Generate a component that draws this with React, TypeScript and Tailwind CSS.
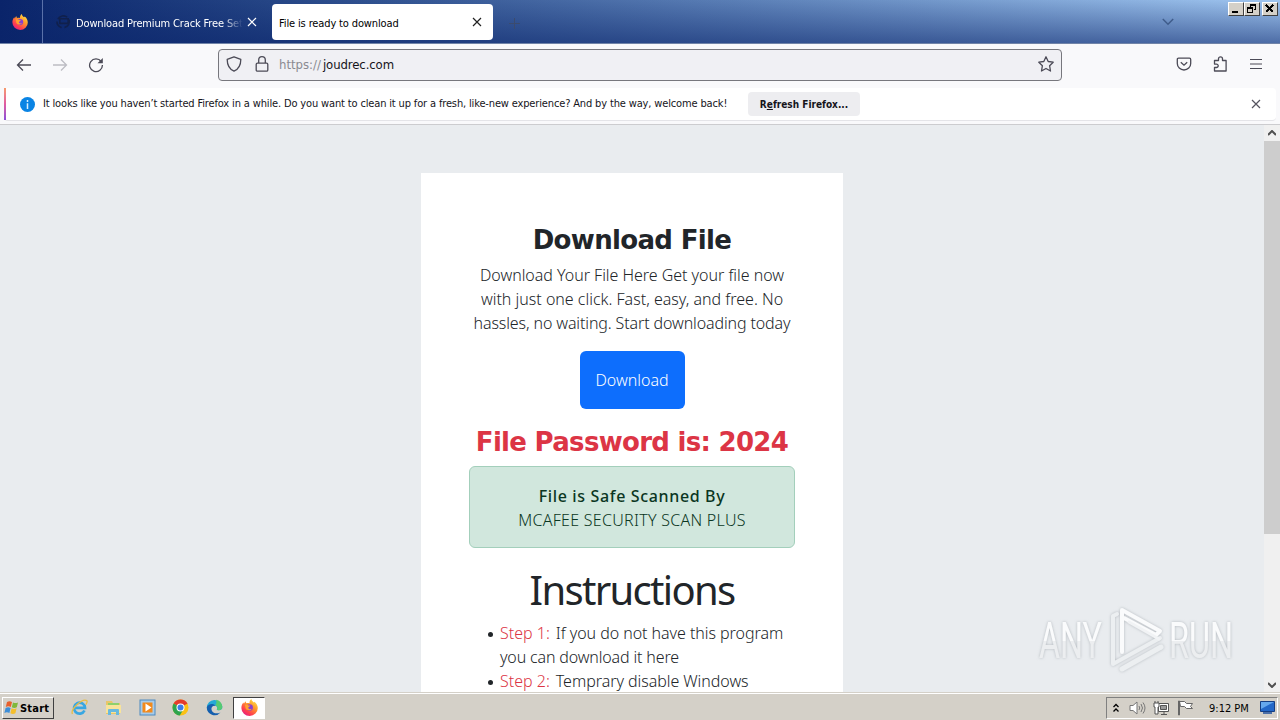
import type { ReactNode } from 'react';

const description = [
  { text: 'Download Your File Here Get your file now', style: 'tracking-[-0.03px]' },
  { text: 'with just one click. Fast, easy, and free. No', style: '' },
  { text: 'hassles, no waiting. Start downloading today', style: 'tracking-[-0.12px]' },
];

const steps = [
  { label: 'Step 1:', lines: ['If you do not have this program', 'you can download it here'] },
  { label: 'Step 2:', lines: ['Temprary disable Windows'] },
];

function FirefoxIcon({ size = 16 }: { size?: number }) {
  return (
    <svg width={size} height={size} viewBox="0 0 16 16">
      <defs>
        <linearGradient id="fx" x1="0.9" y1="0" x2="0.2" y2="1">
          <stop offset="0" stopColor="#fff04d" />
          <stop offset="0.4" stopColor="#ff9a2a" />
          <stop offset="0.75" stopColor="#ff3f4f" />
          <stop offset="1" stopColor="#e01b8a" />
        </linearGradient>
      </defs>
      <path d="M9.800 0c.2 1.800 1.400 2.400 2.300 3.300l.5-.8c1.900 1.300 3.200 3.400 3.200 6A7.700 7.400 0 0 1 .4 8.600C.3 6.400 1 4.600 2.400 3.200l.3 1.200L4.200 2l.8 2c1-.4 2-.4 3 0C7.900 2.300 8.500.8 9.800 0z" fill="url(#fx)" />
      <circle cx="8.200" cy="8" r="3" fill="#8a3fd0" />
      <path d="M3.800 5.600c1.300-.7 2.500-.2 3.200.4l1.800.2c-.2 1.100-1.600 1-1.900 1.900-.3 1.200 1.300 2 3.200 1-1 1.900-4.700 2.100-5.800-.4z" fill="#ffa22e" />
    </svg>
  );
}

function CloseIcon({ className }: { className: string }) {
  return (
    <svg className={className} width="10" height="10" viewBox="0 0 10 10" stroke="currentColor" strokeWidth="1.2" fill="none">
      <path d="M1 1l8 8M9 1L1 9" />
    </svg>
  );
}

function WinButton({ children }: { children: ReactNode }) {
  return (
    <div className="flex h-[14px] w-4 items-center justify-center border border-t-white border-r-[#404040] border-b-[#404040] border-l-white bg-[#d4d0c8]">
      <svg width="12" height="12" viewBox="0 0 12 12" fill="none" stroke="#000" shapeRendering="crispEdges">
        {children}
      </svg>
    </div>
  );
}

function TabStrip() {
  return (
    <div className="h-11 shrink-0 bg-linear-to-r from-[#0a246a] to-[#a0c6f0]">
      <div className="flex h-full border-b border-[#7184a8] bg-linear-to-b from-transparent to-[#0a246a]/55">
        <div className="flex w-[43px] items-center justify-center border-r border-[#5a71a9] pr-0.5">
          <FirefoxIcon size={16} />
        </div>
        <div className="flex w-[229px] items-center pl-[13px]">
          <svg width="15" height="15" viewBox="0 0 16 16" fill="none" stroke="#10204c" strokeWidth="1.700">
            <path d="M2 5.500C4 2 9 .8 12 3.500M14 6c1 4-1 7.500-5 8.500M6 14.500C3 13.500 1 11 1 8M4 5h9v5H4z" />
          </svg>
          <div className="mt-1 ml-[5px] w-[167px] mask-r-from-88% mask-r-to-100% text-[11px] leading-4 tracking-[-0.14px] whitespace-nowrap text-white">
            Download Premium Crack Free Set
          </div>
          <CloseIcon className="ml-1 text-white" />
        </div>
        <div className="mt-1 flex h-9 w-[221px] items-center rounded bg-white pr-[11px] pl-[7px] text-[11px] text-black">
          <span className="flex-1 pt-[3px] leading-4 tracking-[-0.13px] whitespace-nowrap">File is ready to download</span>
          <CloseIcon className="text-[#222]" />
        </div>
        <svg className="mt-[18px] ml-4" width="11" height="11" viewBox="0 0 11 11" stroke="#3b4b6e">
          <path d="M5.500 0v11M0 5.500h11" />
        </svg>
        <svg className="mt-[18px] ml-auto" width="12" height="8" viewBox="0 0 12 8" fill="none" stroke="#3f5c8b" strokeWidth="1.500">
          <path d="M.8 1L6 6.200 11.200 1" />
        </svg>
        <div className="mt-0.5 mr-0.5 ml-[54px] flex">
          <WinButton><path d="M2 9.500h6M2 8.500h6" /></WinButton>
          <WinButton><path d="M4 2h6M4 1v3M9.500 1v6M8 6.500h2M4 1.500h6M1.500 4v6M1 5h6M6.500 4v6M1 9.500h6M1 4.500h6" /></WinButton>
          <div className="w-0.5" />
          <WinButton><path d="M2 2l7 7M9 2L2 9" strokeWidth="1.800" /></WinButton>
        </div>
      </div>
    </div>
  );
}

function Toolbar() {
  return (
    <div className="flex h-11 shrink-0 items-center bg-[#f9f9fb] pb-0.5 text-[#4c4b57]">
      <svg className="ml-4" width="16" height="16" viewBox="0 0 16 16" fill="none" stroke="currentColor" strokeWidth="1.300">
        <path d="M15 8H1.500M7 2.500L1.500 8 7 13.500" />
      </svg>
      <svg className="ml-5 text-[#bdbdc3]" width="16" height="16" viewBox="0 0 16 16" fill="none" stroke="currentColor" strokeWidth="1.300">
        <path d="M1 8h13.500M9 2.500L14.500 8 9 13.500" />
      </svg>
      <svg className="ml-5" width="16" height="16" viewBox="0 0 16 16" fill="none" stroke="currentColor" strokeWidth="1.300">
        <path d="M13.200 4.500A6.400 6.400 0 1 0 14.400 8" />
        <path d="M14.800 1v5.300H9.500z" fill="currentColor" stroke="none" />
      </svg>

      <div className="ml-[114px] flex h-8 w-[844px] items-center rounded border border-[#77777d] bg-[#f0f0f4]">
        <svg className="ml-[7px] -mt-0.5" width="16" height="16" viewBox="0 0 16 16" fill="none" stroke="currentColor" strokeWidth="1.300">
          <path d="M8 .8l6.800 2.600c0 5-2 9.500-6.800 11.800C3.200 12.900 1.200 8.400 1.200 3.400z" strokeLinejoin="round" />
        </svg>
        <svg className="ml-3 -mt-0.5" width="16" height="16" viewBox="0 0 16 16" fill="none" stroke="currentColor" strokeWidth="1.300">
          <rect x="2.200" y="7.200" width="11.600" height="8" rx="1.200" />
          <path d="M4.700 7V4a3.300 3.300 0 0 1 6.600 0v3" />
        </svg>
        <span className="ml-[9px] text-[13px] whitespace-nowrap text-[#15141a]">
          <span className="text-[#8a8a91]">https://</span>
          <span className="ml-0.5 tracking-[-0.1px]">joudrec.com</span>
        </span>
        <svg className="-mt-0.5 mr-[7px] ml-auto" width="16" height="16" viewBox="0 0 16 16" fill="none" stroke="currentColor" strokeWidth="1.300" strokeLinejoin="round">
          <path d="M8 .8l2.200 4.700 5 .7-3.600 3.500.9 5.300L8 12.500 3.500 15l.9-5.300L.8 6.200l5-.7z" />
        </svg>
      </div>

      <svg className="ml-[114px] -mt-0.5" width="16" height="16" viewBox="0 0 16 16" fill="none" stroke="currentColor" strokeWidth="1.300">
        <path d="M2.500 2.200h11q1.200 0 1.200 1.200v4a6.700 6.600 0 0 1-13.400 0v-4q0-1.200 1.200-1.200z" />
        <path d="M4.800 6.200L8 9.200l3.200-3" />
      </svg>
      <svg className="ml-5 -mt-0.5" width="17" height="16" viewBox="0 0 17 16" fill="none" stroke="currentColor" strokeWidth="1.300" strokeLinejoin="round">
        <path d="M2.500 4.500h4V2.800a2 2 0 0 1 4 0v1.700h3.600V15H2.500v-3.500h2a1.700 1.700 0 0 0 0-3.400h-2z" />
      </svg>
      <svg className="ml-[21px] -mt-0.5" width="12" height="12" viewBox="0 0 12 12" stroke="currentColor" strokeWidth="1.200">
        <path d="M0 1.500h12M0 6h12M0 10.500h12" />
      </svg>
    </div>
  );
}

function Notification() {
  return (
    <div className="h-[37px] shrink-0 border-b border-[#cccccf] bg-[#f9f9fb] px-1">
      <div className="flex h-[33px] items-center rounded-sm border-b border-[#e4e4e8] bg-white">
        <div className="h-full w-0.5 bg-linear-to-b from-[#f79a6b] via-[#e05aa0] to-[#8b4bd8]" />
        <svg className="ml-3.5" width="15" height="15" viewBox="0 0 16 16">
          <circle cx="8" cy="8" r="8" fill="#0a84e4" />
          <path d="M8 3.300v2M8 6.700v6" stroke="#d9efff" strokeWidth="1.600" />
        </svg>
        <span className="ml-2 w-[705px] text-[11px] tracking-[-0.147px] whitespace-nowrap text-[#15141a]">
          It looks like you haven’t started Firefox in a while. Do you want to clean it up for a fresh, like-new experience? And by the way, welcome back!
        </span>
        <div className="flex h-6 w-28 items-center justify-center rounded bg-[#ededf0] text-[10px] font-bold whitespace-nowrap text-[#15141a]">
          R<span className="underline">e</span>fresh Firefox...
        </div>
        <CloseIcon className="mr-[15px] ml-auto text-[#55545f]" />
      </div>
    </div>
  );
}

function Watermark() {
  return (
    <svg className="absolute right-[35px] bottom-[14px] h-[74px] w-[212px]" viewBox="0 0 212 74">
      <defs>
        <linearGradient id="wm" x1="0" y1="0" x2="0" y2="1">
          <stop offset="0.5" stopColor="#fafbfc" />
          <stop offset="0.5" stopColor="#eceef0" />
        </linearGradient>
        <filter id="sh" x="-20%" y="-20%" width="140%" height="140%">
          <feDropShadow dx="0" dy="0" stdDeviation="1.500" floodColor="#a9afb5" floodOpacity="0.85" />
        </filter>
      </defs>
      <g filter="url(#sh)" fill="url(#wm)" fontFamily="Roboto" fontSize="50" fontWeight="400">
        <text x="6" y="54" textLength="63" lengthAdjust="spacingAndGlyphs">ANY</text>
        <text x="136" y="54" textLength="64" lengthAdjust="spacingAndGlyphs">RUN</text>
      </g>
      <g filter="url(#sh)" fill="none" strokeLinecap="round" strokeLinejoin="round">
        <path d="M84 10l-4 2v48l47-26" stroke="#eceff1" strokeWidth="4" />
        <path d="M89 65l39-22" stroke="#eceff1" strokeWidth="5" />
        <path d="M89 48V6l38 21-4 4-32-17" stroke="#fafbfc" strokeWidth="4" />
        <path d="M96 18l30 17" stroke="#f1f3f5" strokeWidth="3" />
      </g>
    </svg>
  );
}

function Page() {
  return (
    <div className="relative flex min-h-0 flex-1 overflow-hidden bg-[#e9ecef]">
      <div className="flex flex-1 justify-center pt-12">
        <div className="h-[700px] w-[422px] bg-white p-12 text-center font-['Noto_Sans','Open_Sans',sans-serif] text-base leading-6 font-light text-[#212529]">
          <h1 className="mb-1.5 pt-0.5 font-['DejaVu_Sans',sans-serif] text-[26px] leading-[34px] font-bold tracking-[-0.65px] whitespace-nowrap">Download File</h1>
          {description.map(({ text, style }) => (
            <p key={text} className={`whitespace-nowrap ${style}`}>{text}</p>
          ))}
          <button className="mt-4 h-[58px] w-[105px] rounded-md bg-[#0d6efd] text-white">Download</button>
          <h2 className="mt-[17px] mb-[7px] font-['DejaVu_Sans',sans-serif] text-[26px] leading-[33px] font-bold tracking-[-0.7px] whitespace-nowrap text-[#dc3545]">File Password is: 2024</h2>
          <div className="h-[82px] rounded-md border border-[#a3cfbb] bg-[#d1e7dd] pt-[17px] text-[#0a3622]">
            <p className="font-medium tracking-[0.65px]">File is Safe Scanned By</p>
            <p className="tracking-[0.28px]">MCAFEE SECURITY SCAN PLUS</p>
          </div>
          <h2 className="mt-[18px] mb-[7px] text-[40px] leading-12 font-normal tracking-[-1.7px]">Instructions</h2>
          <ul className="pl-5 text-left whitespace-nowrap">
            {steps.map(({ label, lines }) => (
              <li key={label} className="flex">
                <span className="mt-[11px] mr-[9px] ml-[-1px] h-[5px] w-[5px] rounded-full bg-[#212529]" />
                <div className="-ml-[2px]">
                  <span className="mr-1.5 text-[#dc3545]">{label}</span>
                  <span className="tracking-[-0.05px]">{lines[0]}</span>
                  {lines[1] && <p className="tracking-[-0.15px]">{lines[1]}</p>}
                </div>
              </li>
            ))}
          </ul>
        </div>
      </div>
      <Watermark />
      <div className="flex w-4 flex-col items-center justify-between bg-[#f0f0f0] pt-[5px] pb-1 text-[#505050]">
        <svg width="8" height="6" viewBox="0 0 8 6" fill="none" stroke="currentColor" strokeWidth="2"><path d="M0 5l4-4 4 4" /></svg>
        <div className="mt-[5px] mb-auto h-[393px] w-4 bg-[#cdcdcd]" />
        <svg width="8" height="6" viewBox="0 0 8 6" fill="none" stroke="currentColor" strokeWidth="2"><path d="M0 1l4 4 4-4" /></svg>
      </div>
    </div>
  );
}

function Taskbar() {
  return (
    <div className="flex h-7 shrink-0 items-center border-t border-[#d4d0c8] bg-[#d4d0c8] text-[11px] text-black shadow-[inset_0_1px_0_#fff]">
      <div className="mt-0.5 ml-0.5 flex h-[22px] w-[52px] items-center border border-t-white border-r-[#404040] border-b-[#404040] border-l-white font-bold">
        <svg className="ml-px" width="15" height="15" viewBox="0 0 15 15">
          <path d="M3 2q2.500-1.500 5 0L6.800 7q-2.500-1.500-5 0z" fill="#e8602c" />
          <path d="M9 2.400q2.500 1.400 5 0L12.800 7.200q-2.500 1.400-5 0z" fill="#80b83c" />
          <path d="M1.600 8q2.500-1.500 5 0l-1.200 5q-2.500-1.500-5 0z" fill="#3d8ed8" />
          <path d="M7.600 8.300q2.500 1.400 5 0l-1.200 5q-2.500 1.400-5 0z" fill="#f4be2c" />
        </svg>
        <span className="mt-0.5 ml-px leading-4 tracking-[0.2px]">Start</span>
      </div>
      <div className="mt-0.5 ml-[17px] flex items-center gap-[17px]">
        <svg width="17" height="17" viewBox="0 0 17 17" fill="none">
          <path d="M13.500 11.500A5.500 5.500 0 1 1 14 8.800H4.500" stroke="#39a7e2" strokeWidth="2.700" />
          <path d="M1.500 15C-1 11 11-1 15.800 1.600q1 1.300-1 4" stroke="#e8bd46" strokeWidth="1.300" />
        </svg>
        <svg width="17" height="17" viewBox="0 0 17 17">
          <path d="M1 2h6l1 2h7v11H1z" fill="#e9c668" />
          <path d="M3 4h11v5H3z" fill="#8ed06c" />
          <path d="M1 6h15v8H1z" fill="#f8e39a" />
          <path d="M3 16v-5q0-1 1-1h9q1 0 1 1v5h-3v-3H6v3z" fill="#69b9df" />
        </svg>
        <svg width="17" height="17" viewBox="0 0 17 17">
          <rect x="1" y="1" width="15" height="15" fill="#a7cbe9" stroke="#4d8ac0" />
          <rect x="3.500" y="3.500" width="10" height="10" fill="#f28a1c" />
          <path d="M6.500 4.500v8l6-4z" fill="#fff" />
        </svg>
        <svg className="-ml-px" width="17" height="17" viewBox="0 0 17 17">
          <circle cx="8.500" cy="8.500" r="8" fill="#fbc116" />
          <path d="M8.500 8.500L1.600 4.400a8 8 0 0 1 13.900.1z" fill="#e33b2e" />
          <path d="M8.500 8.500L1.600 4.400a8 8 0 0 0 6.200 12.100l3.700-6.300z" fill="#2da44e" />
          <path d="M8.500 4.500h7l-6 1z" fill="#e33b2e" />
          <circle cx="8.500" cy="8.500" r="4" fill="#fff" />
          <circle cx="8.500" cy="8.500" r="3" fill="#3b7de9" />
        </svg>
        <svg width="17" height="17" viewBox="0 0 17 17">
          <path d="M.8 8.500a7.800 7.800 0 0 1 15.500-1c.5 3.600-3 4.500-5.600 3.200 1-1.200.7-4.200-2.700-4.200-3.500 0-6 3.500-3.500 7C2 12.800.8 10.500.8 8.500z" fill="#24a9d6" />
          <path d="M.8 8.500C1.500 5 7.500 3.800 9.500 6.800c-3.500-.8-5 2.400-3.500 5.200 1.300 2.500 5 3 8.500 1.500a7.800 7.800 0 0 1-13.700-5z" fill="#155fae" />
          <path d="M10 .8a7.800 7.800 0 0 1 6.300 6.700c.4 3-3 4.500-5.600 3.200 1.400-1.500.8-4-1.700-4.500 2-1 1.500-4 1-5.400z" fill="#56ca72" />
        </svg>
      </div>
      <div className="mt-0.5 ml-[10px] flex h-[22px] w-8 items-center justify-center border border-t-[#404040] border-r-white border-b-white border-l-[#404040] bg-white">
        <FirefoxIcon size={17} />
      </div>
      <div className="mt-0.5 mr-0.5 ml-auto flex h-[22px] w-[172px] items-center border border-t-[#808080] border-r-white border-b-white border-l-[#808080]">
        <svg className="ml-[5px]" width="8" height="10" viewBox="0 0 8 10" fill="none" stroke="#000" strokeWidth="1.300">
          <path d="M1.500 4L4 1.500 6.500 4M1.500 8.500L4 6l2.500 2.500" />
        </svg>
        <svg className="ml-[9px]" width="17" height="16" viewBox="0 0 17 16" fill="none" stroke="#777">
          <path d="M1 5.500h3L8 2v12L4 10.500H1z" fill="#fff" />
          <path d="M10 6q1.500 2 0 4M12 4q3 4 0 8M14 2.500q4 5.500 0 11" />
        </svg>
        <svg className="ml-[7px]" width="17" height="16" viewBox="0 0 17 16" fill="#fff" stroke="#555">
          <path d="M5.500 3.500h10v8h-10zM8 14.500h6M11 12v2" />
          <path d="M7.500 5.500h6v4h-6z" fill="#999" />
          <path d="M1 3h5v4H5v7H2V7H1zM2 1v2M5 1v2" />
        </svg>
        <svg className="ml-[7px]" width="17" height="16" viewBox="0 0 17 16" fill="#fff" stroke="#666">
          <path d="M2.500 1.500h5l2 2h6l-2 3 2 2h-6l-2-2h-4zM1.500 1v14h1V1z" />
        </svg>
        <span className="mt-0.5 ml-[15px] leading-4 whitespace-nowrap">9:12 PM</span>
        <svg className="mr-0.5 ml-auto" width="15" height="14" viewBox="0 0 15 14">
          <path d="M.5.500h14v10H.5z" fill="#2368c8" stroke="#153e83" />
          <path d="M1 1h13L1 8z" fill="#65a8ed" />
          <path d="M3 12h9" stroke="#4b6fa8" strokeWidth="2" />
        </svg>
      </div>
    </div>
  );
}

export default function App() {
  return (
    <div className="relative flex h-[720px] w-[1280px] flex-col overflow-hidden font-['DejaVu_Sans_Condensed','DejaVu_Sans',sans-serif]">
      <TabStrip />
      <Toolbar />
      <Notification />
      <Page />
      <Taskbar />
    </div>
  );
}
